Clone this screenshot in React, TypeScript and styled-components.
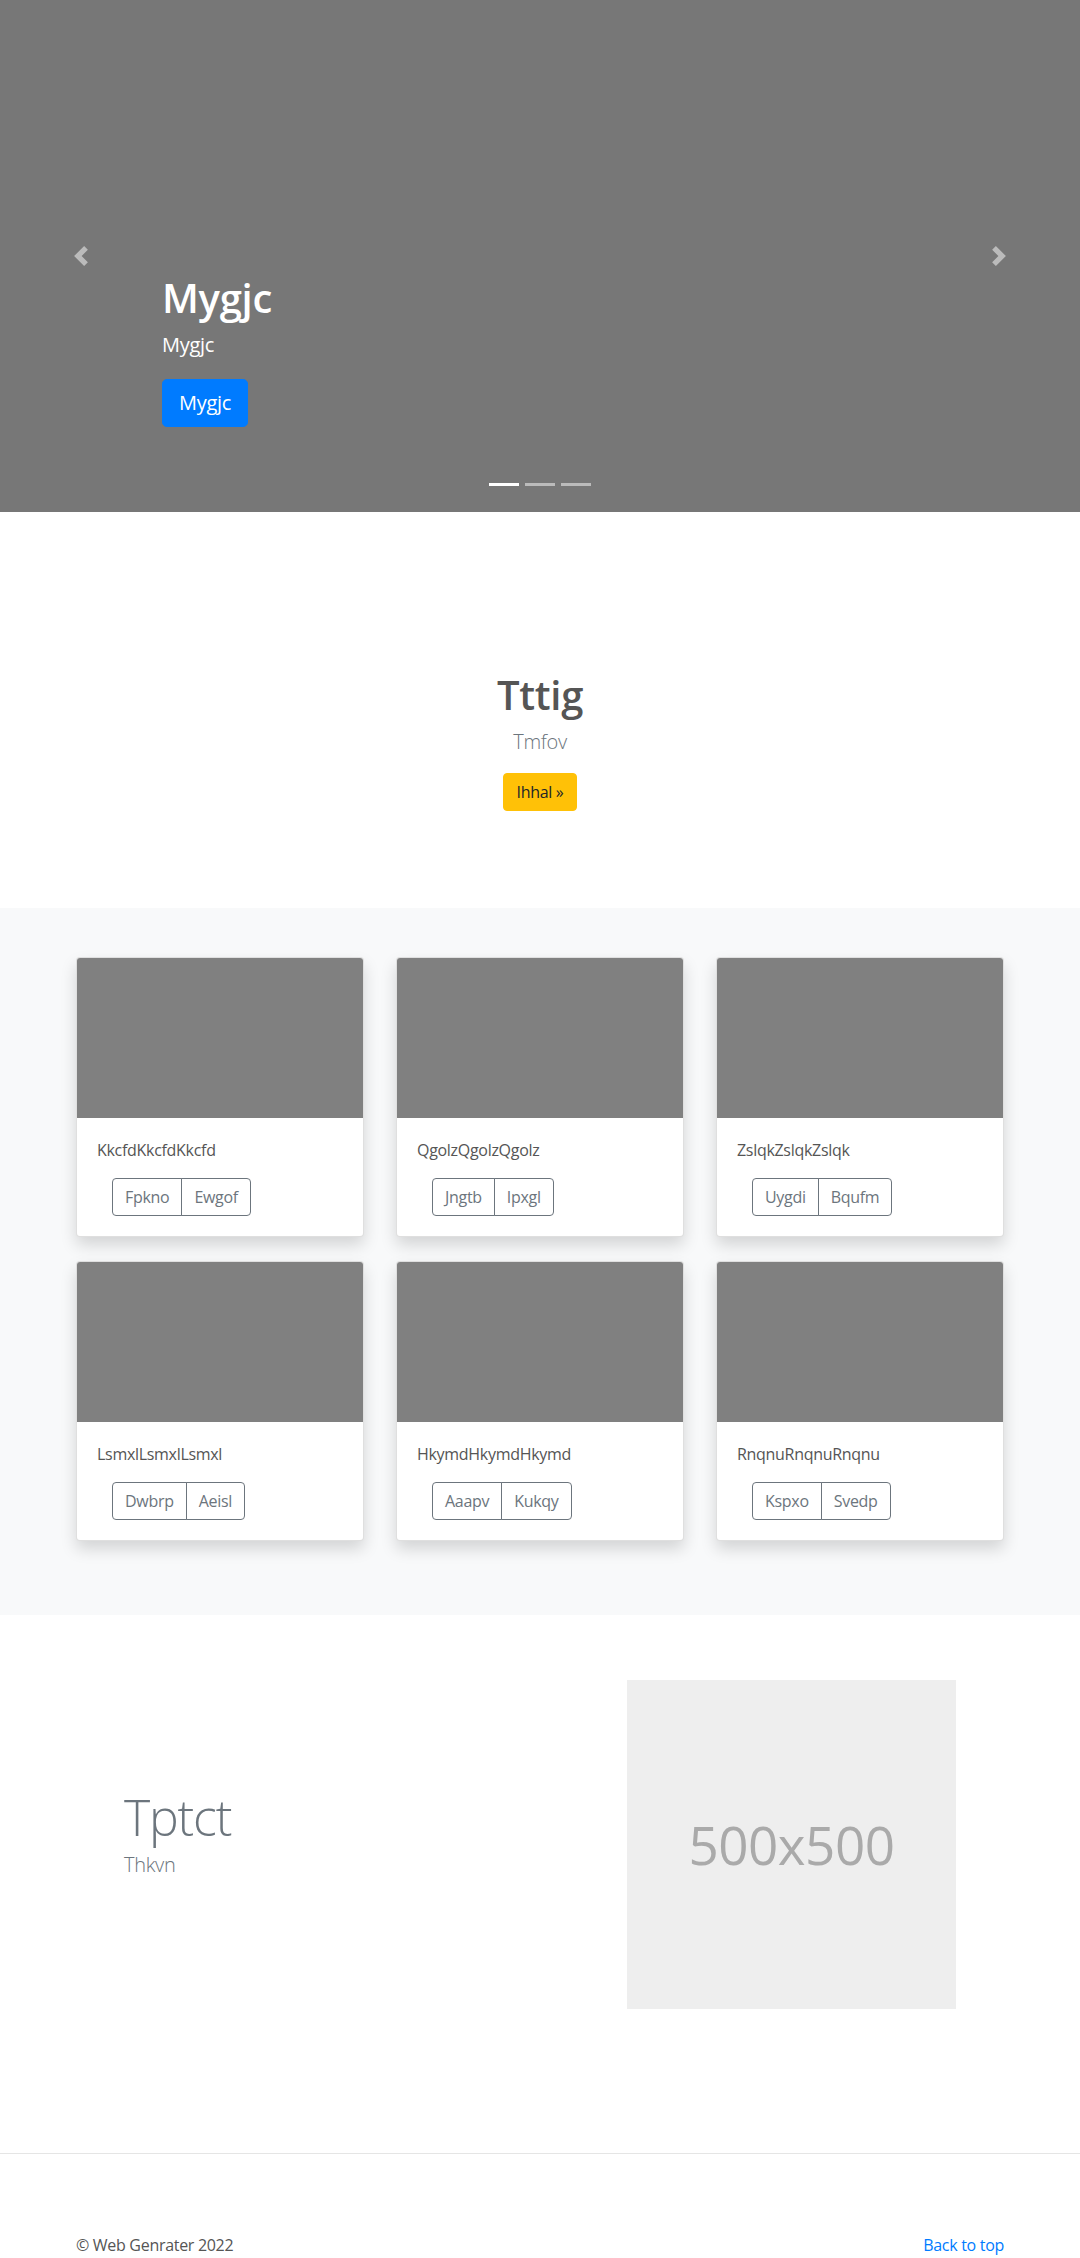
import { createGlobalStyle } from 'styled-components';
import styled from 'styled-components';

const GlobalStyle = createGlobalStyle`
    *, *::before, *::after {
        box-sizing: border-box;
    }
    body {
        margin: 0;
        font-family: "Open Sans", "Noto Sans", "Liberation Sans", sans-serif;
        font-size: 16px;
        line-height: 1.5;
        letter-spacing: -0.3px;
        color: #555;
        background: #fff;
    }
    h1, h2, p {
        margin: 0;
    }
`;

const Carousel = styled.section`
    position: relative;
    height: 512px;
    background: #777;
    overflow: hidden;
`;

const Caption = styled.div`
    position: absolute;
    left: 15%;
    right: 15%;
    bottom: 48px;
    padding: 20px 0 37px;
    color: #fff;
    text-align: left;
`;

const CaptionTitle = styled.h1`
    font-size: 40px;
    font-weight: 600;
    line-height: 1.2;
    margin-bottom: 8px;
`;

const CaptionText = styled.p`
    font-size: 20px;
    line-height: 1.5;
    margin-bottom: 19px;
`;

const PrimaryButton = styled.a`
    display: inline-block;
    vertical-align: top;
    padding: 8px 16px;
    font-size: 20px;
    line-height: 1.5;
    color: #fff;
    background: #007bff;
    border: 1px solid #007bff;
    border-radius: 4.8px;
    text-decoration: none;
`;

const Control = styled.a<{ $side: 'left' | 'right' }>`
    position: absolute;
    top: 0;
    bottom: 0;
    ${({ $side }) => ($side === 'left' ? 'left: 0;' : 'right: 0;')}
    width: 15%;
    display: flex;
    align-items: center;
    justify-content: center;
    opacity: 0.5;

    svg {
        width: 20px;
        height: 20px;
        fill: #fff;
    }
`;

const Indicators = styled.ol`
    position: absolute;
    left: 0;
    right: 0;
    bottom: 0;
    display: flex;
    justify-content: center;
    margin: 0 15% 16px;
    padding: 0;
    list-style: none;
`;

const Indicator = styled.li<{ $active?: boolean }>`
    box-sizing: content-box;
    width: 30px;
    height: 3px;
    margin: 0 3px;
    background: #fff;
    background-clip: padding-box;
    border-top: 10px solid transparent;
    border-bottom: 10px solid transparent;
    opacity: ${({ $active }) => ($active ? 1 : 0.5)};
`;

const Jumbotron = styled.section`
    padding: 159px 0 97px;
    text-align: center;
`;

const JumboTitle = styled.h1`
    font-size: 40px;
    font-weight: 600;
    line-height: 1.2;
    margin-bottom: 8px;
`;

const Lead = styled.p`
    font-size: 20px;
    font-weight: 300;
    line-height: 1.5;
    color: #6c757d;
    margin-bottom: 16px;
`;

const WarningButton = styled.a`
    display: inline-block;
    padding: 6px 12px;
    font-size: 16px;
    line-height: 1.5;
    color: #212529;
    background: #ffc107;
    border: 1px solid #ffc107;
    border-radius: 4px;
    text-decoration: none;
`;

const Album = styled.section`
    background: #f8f9fa;
    padding: 49px 0 74px;
`;

const CardGrid = styled.div`
    display: grid;
    grid-template-columns: repeat(3, 288px);
    column-gap: 32px;
    row-gap: 24px;
    justify-content: center;
`;

const Card = styled.div`
    display: flex;
    flex-direction: column;
    background: #fff;
    border: 1px solid rgba(0, 0, 0, 0.125);
    border-radius: 4px;
    box-shadow: 0 8px 16px rgba(0, 0, 0, 0.15);
    overflow: hidden;
`;

const Thumb = styled.div`
    height: 160px;
    background: #808080;
`;

const CardBody = styled.div`
    padding: 20px;
`;

const CardText = styled.p`
    margin-bottom: 16px;
`;

const ButtonGroup = styled.div`
    display: inline-flex;
    margin-left: 15px;
`;

const OutlineButton = styled.button`
    padding: 6px 12px;
    font: inherit;
    font-size: 16px;
    line-height: 1.5;
    letter-spacing: -0.3px;
    color: #6c757d;
    background: transparent;
    border: 1px solid #6c757d;
    border-radius: 0;

    &:first-child {
        border-radius: 4px 0 0 4px;
    }
    &:last-child {
        margin-left: -1px;
        border-radius: 0 4px 4px 0;
    }
`;

const Featurette = styled.section`
    padding: 65px 0 64px;
`;

const FeatureRow = styled.div`
    display: flex;
    max-width: 832px;
    margin: 0 auto;
`;

const FeatureText = styled.div`
    flex: 1;
    padding-top: 112px;
`;

const FeatureHeading = styled.h2`
    font-size: 50px;
    font-weight: 300;
    line-height: 1;
    letter-spacing: -1.2px;
    color: #6c757d;
    margin-bottom: 8px;
`;

const Placeholder = styled.div`
    flex: 0 0 329px;
    height: 329px;
    display: flex;
    align-items: center;
    justify-content: center;
    background: #eee;
    color: #aaa;
    font-size: 53px;
    letter-spacing: -0.5px;
`;

const Divider = styled.hr`
    margin: 80px 0 0;
    border: 0;
    border-top: 1px solid rgba(0, 0, 0, 0.1);
`;

const Footer = styled.footer`
    display: flex;
    justify-content: space-between;
    padding: 79px 76px 48px;
`;

const FooterLink = styled.a`
    color: #007bff;
    text-decoration: none;
`;

const cards = [
    { title: 'KkcfdKkcfdKkcfd', buttons: ['Fpkno', 'Ewgof'] },
    { title: 'QgolzQgolzQgolz', buttons: ['Jngtb', 'Ipxgl'] },
    { title: 'ZslqkZslqkZslqk', buttons: ['Uygdi', 'Bqufm'] },
    { title: 'LsmxlLsmxlLsmxl', buttons: ['Dwbrp', 'Aeisl'] },
    { title: 'HkymdHkymdHkymd', buttons: ['Aaapv', 'Kukqy'] },
    { title: 'RnqnuRnqnuRnqnu', buttons: ['Kspxo', 'Svedp'] },
];

export default function App() {
    return (
        <>
            <GlobalStyle />
            <Carousel>
                <Caption>
                    <CaptionTitle>Mygjc</CaptionTitle>
                    <CaptionText>Mygjc</CaptionText>
                    <p>
                        <PrimaryButton href="#">Mygjc</PrimaryButton>
                    </p>
                </Caption>
                <Control $side="left" href="#">
                    <svg viewBox="0 0 8 8">
                        <path d="M5.25 0l-4 4 4 4 1.5-1.5L4.25 4l2.5-2.5L5.25 0z" />
                    </svg>
                </Control>
                <Control $side="right" href="#">
                    <svg viewBox="0 0 8 8">
                        <path d="M2.75 0l-1.5 1.5L3.75 4l-2.5 2.5L2.75 8l4-4-4-4z" />
                    </svg>
                </Control>
                <Indicators>
                    <Indicator $active />
                    <Indicator />
                    <Indicator />
                </Indicators>
            </Carousel>

            <Jumbotron>
                <JumboTitle>Tttig</JumboTitle>
                <Lead>Tmfov</Lead>
                <WarningButton href="#">Ihhal »</WarningButton>
            </Jumbotron>

            <Album>
                <CardGrid>
                    {cards.map((card) => (
                        <Card key={card.title}>
                            <Thumb />
                            <CardBody>
                                <CardText>{card.title}</CardText>
                                <ButtonGroup>
                                    {card.buttons.map((label) => (
                                        <OutlineButton key={label} type="button">
                                            {label}
                                        </OutlineButton>
                                    ))}
                                </ButtonGroup>
                            </CardBody>
                        </Card>
                    ))}
                </CardGrid>
            </Album>

            <Featurette>
                <FeatureRow>
                    <FeatureText>
                        <FeatureHeading>Tptct</FeatureHeading>
                        <Lead>Thkvn</Lead>
                    </FeatureText>
                    <Placeholder>500x500</Placeholder>
                </FeatureRow>
            </Featurette>

            <Divider />

            <Footer>
                <p>© Web Genrater 2022</p>
                <p>
                    <FooterLink href="#">Back to top</FooterLink>
                </p>
            </Footer>
        </>
    );
}
